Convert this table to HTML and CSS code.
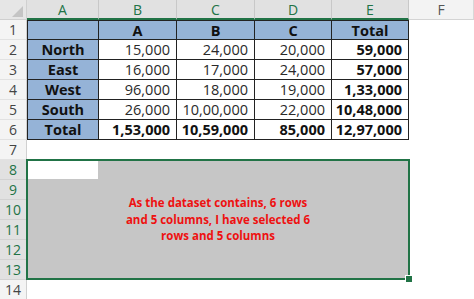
FILE: index.html
```html
<!DOCTYPE html>
<html>
<head>
<meta charset="utf-8">
<link rel="stylesheet" href="styles.css">
</head>
<body>
<div class="sheet">
  <div class="corner"><span class="tri"></span></div>
  <div class="ch sel">A</div>
  <div class="ch sel">B</div>
  <div class="ch sel">C</div>
  <div class="ch sel">D</div>
  <div class="ch sel">E</div>
  <div class="ch">F</div>

  <div class="rh">1</div>
  <div class="c t blue top left"></div>
  <div class="c t blue top b ctr">A</div>
  <div class="c t blue top b ctr">B</div>
  <div class="c t blue top b ctr">C</div>
  <div class="c t blue top b ctr">Total</div>
  <div class="c"></div>

  <div class="rh">2</div>
  <div class="c t blue left b ctr">North</div>
  <div class="c t num">15,000</div>
  <div class="c t num">24,000</div>
  <div class="c t num">20,000</div>
  <div class="c t num b">59,000</div>
  <div class="c"></div>

  <div class="rh">3</div>
  <div class="c t blue left b ctr">East</div>
  <div class="c t num">16,000</div>
  <div class="c t num">17,000</div>
  <div class="c t num">24,000</div>
  <div class="c t num b">57,000</div>
  <div class="c"></div>

  <div class="rh">4</div>
  <div class="c t blue left b ctr">West</div>
  <div class="c t num">96,000</div>
  <div class="c t num">18,000</div>
  <div class="c t num">19,000</div>
  <div class="c t num b">1,33,000</div>
  <div class="c"></div>

  <div class="rh">5</div>
  <div class="c t blue left b ctr">South</div>
  <div class="c t num">26,000</div>
  <div class="c t num">10,00,000</div>
  <div class="c t num">22,000</div>
  <div class="c t num b">10,48,000</div>
  <div class="c"></div>

  <div class="rh">6</div>
  <div class="c t blue left b ctr">Total</div>
  <div class="c t num b">1,53,000</div>
  <div class="c t num b">10,59,000</div>
  <div class="c t num b">85,000</div>
  <div class="c t num b">12,97,000</div>
  <div class="c"></div>

  <div class="rh">7</div>
  <div class="rh rsel">8</div>
  <div class="rh rsel">9</div>
  <div class="rh rsel">10</div>
  <div class="rh rsel">11</div>
  <div class="rh rsel">12</div>
  <div class="rh rsel">13</div>
  <div class="rh">14</div>

  <div class="selection">
    <div class="active"></div>
    <div class="note">As the dataset contains, 6 rows<br>and 5 columns, I have selected 6<br>rows and 5 columns</div>
    <span class="handle"></span>
  </div>
</div>
</body>
</html>
```

FILE: styles.css
```css
html, body {
  margin: 0;
  padding: 0;
  background: #ffffff;
}

.sheet {
  display: grid;
  grid-template-columns: 27px 72px 78px 78px 77px 77px 65px;
  grid-template-rows: repeat(15, 20px);
  width: 474px;
  height: 299px;
  overflow: hidden;
  font-family: "Open Sans", "Liberation Sans", sans-serif;
  color: #1a1a1a;
}

.corner {
  grid-column: 1;
  grid-row: 1;
  background: #e6e6e6;
  border-right: 1px solid #d0d0d0;
  border-bottom: 1px solid #cfcfcf;
  box-sizing: border-box;
  position: relative;
}

.tri {
  position: absolute;
  right: 3px;
  bottom: 2px;
  width: 0;
  height: 0;
  border-left: 11px solid transparent;
  border-bottom: 11px solid #c4c4c4;
}

.ch {
  background: #f3f3f3;
  color: #555;
  font-size: 14px;
  display: flex;
  align-items: center;
  justify-content: center;
  box-sizing: border-box;
  border-right: 1px solid #d8d8d8;
  border-bottom: 1px solid #d4d4d4;
}

.ch.sel {
  background: #e1e1e1;
  color: #217346;
  border-right: 1px solid #c8c8c8;
  border-bottom: 2px solid #217346;
}

.rh {
  grid-column: 1;
  background: #f4f4f4;
  color: #444;
  font-size: 14px;
  display: flex;
  align-items: center;
  justify-content: center;
  box-sizing: border-box;
  border-right: 1px solid #d0d0d0;
  border-bottom: 1px solid #e2e2e2;
}

.rh.rsel {
  background: #e1e1e1;
  color: #217346;
  border-bottom: 1px solid #d2d2d2;
}

.c {
  box-sizing: border-box;
  font-size: 14.5px;
  display: flex;
  align-items: center;
  white-space: nowrap;
}

.t {
  border-right: 1px solid #222;
  border-bottom: 1px solid #222;
}

.top { border-top: 1px solid #222; }
.left { border-left: 1px solid #222; }

.blue { background: #95b3d7; }

.b { font-weight: 700; color: #111; }

.ctr { justify-content: center; }

.num {
  justify-content: flex-end;
  padding-right: 6px;
  color: #2a2a2a;
}

.num.b { color: #111; }

.selection {
  grid-column: 2 / 7;
  grid-row: 9 / 15;
  margin-left: -1px;
  margin-right: -1px;
  margin-top: -1px;
  background: #c6c6c6;
  border: 2px solid #217346;
  box-sizing: border-box;
  position: relative;
  display: grid;
  grid-template-columns: 70px 1fr;
  grid-template-rows: 18px 1fr;
}

.active {
  grid-column: 1;
  grid-row: 1;
  background: #ffffff;
}

.note {
  grid-column: 1 / 3;
  grid-row: 1 / 3;
  display: flex;
  align-items: center;
  justify-content: center;
  text-align: center;
  color: #ee1111;
  font-weight: 700;
  font-size: 11.5px;
  line-height: 16.5px;
  padding-top: 1px;
}

.handle {
  position: absolute;
  right: -5px;
  bottom: -5px;
  width: 6px;
  height: 6px;
  background: #217346;
  border: 1px solid #ffffff;
}
```
